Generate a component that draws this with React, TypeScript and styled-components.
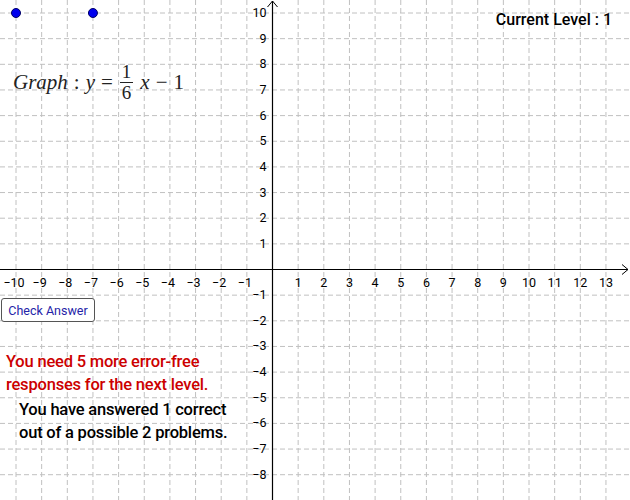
import React from 'react'
import styled, { createGlobalStyle } from 'styled-components'

const GlobalStyle = createGlobalStyle`
  html, body { margin: 0; padding: 0; background: #fff; }
  body { font-family: Roboto, 'Liberation Sans', sans-serif; }
`

const UNIT = 25.65
const OX = 272.5
const OY = 269.5
const W = 630
const H = 500

const Stage = styled.div`
  position: relative;
  width: ${W}px;
  height: ${H}px;
  overflow: hidden;
  background: #fff;
`

const Canvas = styled.svg`
  display: block;
  font-family: Roboto, 'Liberation Sans', sans-serif;
  font-size: 12.5px;
`

const Level = styled.div`
  position: absolute;
  top: 10px;
  right: 18px;
  font-size: 16px;
  font-weight: 500;
  color: #000;
`

const Formula = styled.div`
  position: absolute;
  left: 13px;
  top: 62px;
  display: flex;
  align-items: center;
  gap: 6px;
  font-family: 'Liberation Serif', 'DejaVu Serif', serif;
  font-size: 21px;
  color: #222;
`

const Ital = styled.span`
  font-style: italic;
`

const Frac = styled.span`
  display: inline-flex;
  flex-direction: column;
  align-items: center;
  font-size: 19px;
  line-height: 20px;
  margin: 0 1px;
  & > span:first-child { border-bottom: 1px solid #222; padding: 0 2px; }
`

const CheckButton = styled.button`
  position: absolute;
  left: 1px;
  top: 298px;
  width: 94px;
  height: 24px;
  padding: 0;
  background: #fff;
  border: 1px solid #555;
  border-radius: 3px;
  color: #2424a8;
  font-family: Roboto, 'Liberation Sans', sans-serif;
  font-size: 12.5px;
`

const Message = styled.div<{ $color: string; $left: number; $top: number }>`
  position: absolute;
  left: ${p => p.$left}px;
  top: ${p => p.$top}px;
  color: ${p => p.$color};
  font-size: 16.5px;
  font-weight: 500;
  line-height: 23px;
  letter-spacing: -0.2px;
`

const px = (x: number) => OX + x * UNIT
const py = (y: number) => OY - y * UNIT

const Grid: React.FC = () => {
  const xs: number[] = []
  for (let i = -10; i <= 13; i++) xs.push(i)
  const ys: number[] = []
  for (let j = -8; j <= 10; j++) ys.push(j)
  return (
    <Canvas width={W} height={H}>
      {xs.filter(i => i !== 0).map(i => (
        <line key={'vx' + i} x1={px(i)} y1={0} x2={px(i)} y2={H} stroke="#c0c0c0" strokeDasharray="5 3" />
      ))}
      {ys.filter(j => j !== 0).map(j => (
        <line key={'hy' + j} x1={0} y1={py(j)} x2={W} y2={py(j)} stroke="#c0c0c0" strokeDasharray="5 3" />
      ))}
      <line x1={0} y1={OY} x2={628} y2={OY} stroke="#000" strokeWidth={1.2} />
      <polyline points={`622,${OY - 5} 628,${OY} 622,${OY + 5}`} fill="none" stroke="#000" />
      <line x1={OX} y1={H} x2={OX} y2={1} stroke="#000" strokeWidth={1.2} />
      <polyline points={`${OX - 5},7 ${OX},1 ${OX + 5},7`} fill="none" stroke="#000" />
      {xs.filter(i => i !== 0).map(i => (
        <text key={'lx' + i} x={px(i) + (i < 0 ? -2 : 0)} y={OY + 17} textAnchor="middle">
          {i < 0 ? '\u2212' + -i : i}
        </text>
      ))}
      {ys.filter(j => j !== 0).map(j => (
        <text key={'ly' + j} x={OX - 6} y={py(j) + 4} textAnchor="end">
          {j < 0 ? '\u2212' + -j : j}
        </text>
      ))}
      <circle cx={px(-10)} cy={py(10)} r={4.5} fill="#0000ee" stroke="#000066" />
      <circle cx={px(-7)} cy={py(10)} r={4.5} fill="#0000ee" stroke="#000066" />
    </Canvas>
  )
}

export default function App() {
  return (
    <>
      <GlobalStyle />
      <Stage>
        <Grid />
        <Level>Current Level : 1</Level>
        <Formula>
          <Ital>Graph</Ital>
          <span>:</span>
          <Ital>y</Ital>
          <span>=</span>
          <Frac><span>1</span><span>6</span></Frac>
          <Ital>x</Ital>
          <span>{'\u2212'}</span>
          <span>1</span>
        </Formula>
        <CheckButton>Check Answer</CheckButton>
        <Message $color="#cc0000" $left={6} $top={350}>
          You need 5 more error-free<br />responses for the next level.
        </Message>
        <Message $color="#000" $left={19} $top={398}>
          You have answered 1 correct<br />out of a possible 2 problems.
        </Message>
      </Stage>
    </>
  )
}
